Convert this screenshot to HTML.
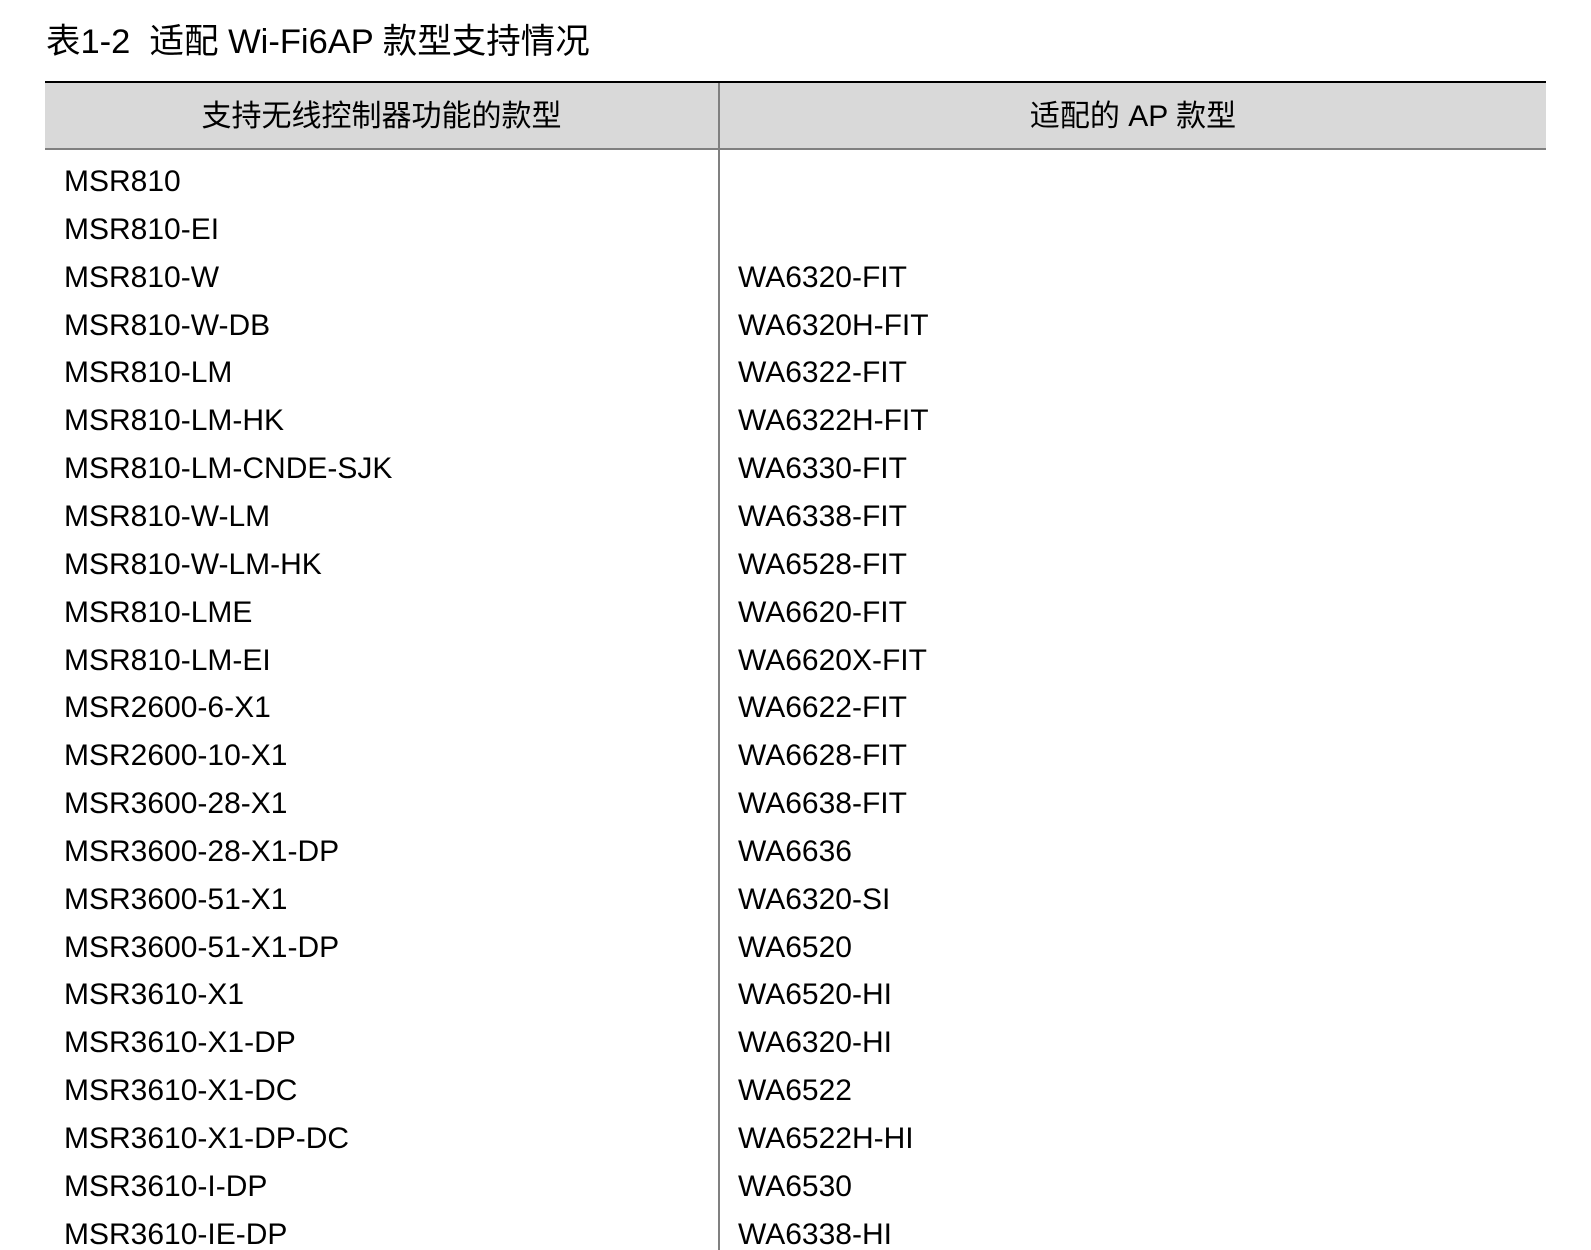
<!DOCTYPE html>
<html><head><meta charset="utf-8"><style>
html,body{margin:0;padding:0;background:#fff;width:1591px;height:1250px;overflow:hidden;position:relative;font-family:"Liberation Sans","Noto Sans CJK SC",sans-serif;color:#000}
.t{position:absolute;left:46px;top:19px;font-size:34.5px;line-height:46px;white-space:nowrap}
.top{position:absolute;left:45px;width:1501px;top:81px;height:2px;background:#000}
.hd{position:absolute;left:45px;width:1501px;top:83px;height:65px;background:#d9d9d9}
.hl{position:absolute;left:45px;width:1501px;top:148px;height:2px;background:#808080}
.vl{position:absolute;left:718px;width:2px;top:83px;height:1167px;background:#808080}
.h{position:absolute;top:84px;height:65px;line-height:65px;font-size:30px;text-align:center}
.r{position:absolute;font-size:30px;line-height:40px;white-space:nowrap}
</style></head><body>
<div class="t">表1-2&nbsp; 适配 Wi-Fi6AP 款型支持情况</div>
<div class="hd"></div><div class="top"></div><div class="hl"></div><div class="vl"></div>
<div class="h" style="left:45px;width:673px">支持无线控制器功能的款型</div>
<div class="h" style="left:720px;width:826px">适配的 AP 款型</div>
<div id="rows"></div>
<script>
var L=["MSR810","MSR810-EI","MSR810-W","MSR810-W-DB","MSR810-LM","MSR810-LM-HK","MSR810-LM-CNDE-SJK","MSR810-W-LM","MSR810-W-LM-HK","MSR810-LME","MSR810-LM-EI","MSR2600-6-X1","MSR2600-10-X1","MSR3600-28-X1","MSR3600-28-X1-DP","MSR3600-51-X1","MSR3600-51-X1-DP","MSR3610-X1","MSR3610-X1-DP","MSR3610-X1-DC","MSR3610-X1-DP-DC","MSR3610-I-DP","MSR3610-IE-DP"];
var R=["","","WA6320-FIT","WA6320H-FIT","WA6322-FIT","WA6322H-FIT","WA6330-FIT","WA6338-FIT","WA6528-FIT","WA6620-FIT","WA6620X-FIT","WA6622-FIT","WA6628-FIT","WA6638-FIT","WA6636","WA6320-SI","WA6520","WA6520-HI","WA6320-HI","WA6522","WA6522H-HI","WA6530","WA6338-HI"];
var h="";
for(var i=0;i<L.length;i++){var y=182+i*47.85-20;
h+='<div class="r" style="left:64px;top:'+y+'px">'+L[i]+'</div>';
if(R[i])h+='<div class="r" style="left:738px;top:'+y+'px">'+R[i]+'</div>';}
document.getElementById("rows").innerHTML=h;
</script>
</body></html>
